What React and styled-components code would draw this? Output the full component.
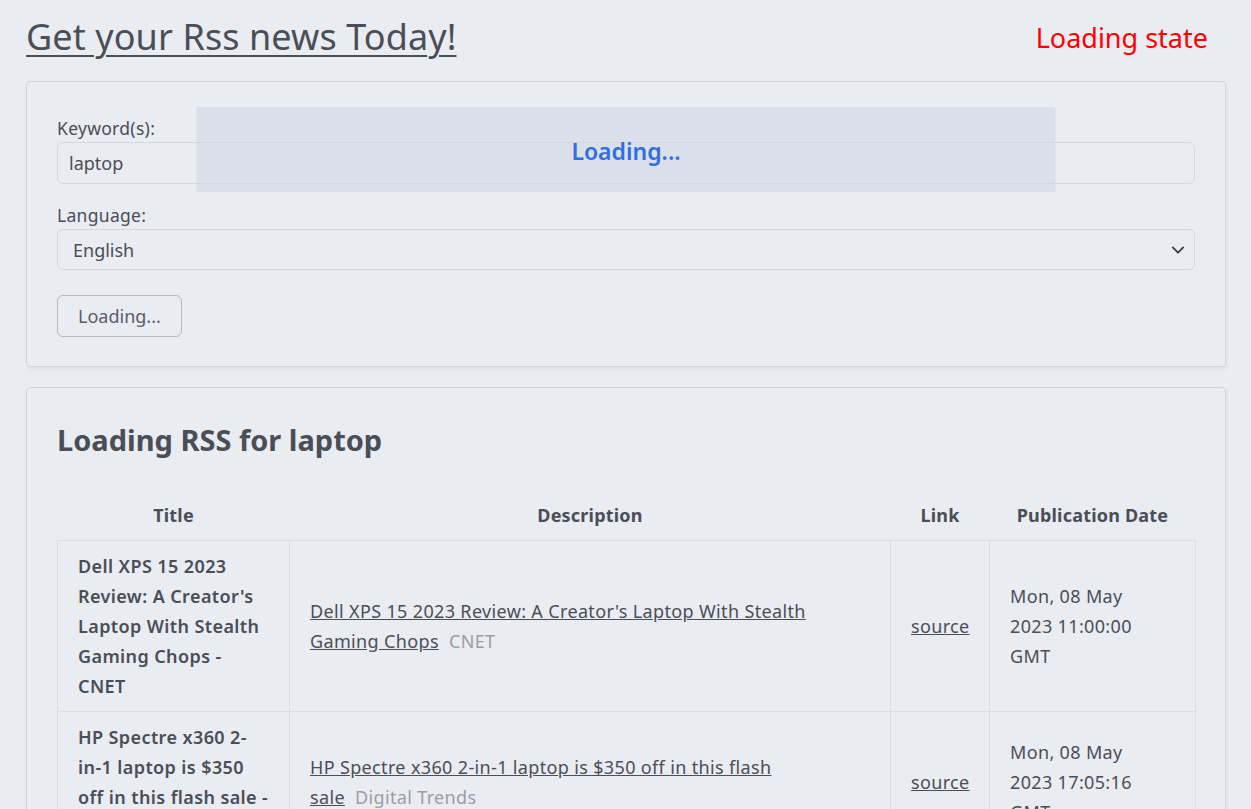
import React from "react";
import styled, { createGlobalStyle } from "styled-components";

const GlobalStyle = createGlobalStyle`
    html, body {
        margin: 0;
        padding: 0;
        background: #e9ecf1;
    }
    body {
        font-family: "Noto Sans", "Open Sans", sans-serif;
        color: #4a4e57;
    }
`;

const Page = styled.div`
    padding: 13px 25px 0 26px;
`;

const Header = styled.header`
    display: flex;
    justify-content: space-between;
    align-items: center;
    padding-right: 18px;
`;

const Heading = styled.h1`
    margin: 0;
    font-size: 36px;
    font-weight: 400;
    line-height: 48px;
    letter-spacing: 0.1px;
    text-decoration: underline;
    text-decoration-thickness: 2px;
    text-underline-offset: 5px;
    color: #4a4e57;
`;

const StateLabel = styled.span`
    font-size: 27px;
    color: #ff0000;
`;

const Card = styled.section`
    position: relative;
    margin-top: ${(p) => p.$gap}px;
    padding: ${(p) => p.$pad};
    border: 1px solid #d2d5db;
    border-radius: 4px;
    box-shadow: 1px 2px 4px rgba(0, 0, 0, 0.06);
`;

const FormGroup = styled.div`
    display: flex;
    flex-direction: column;
    margin-bottom: ${(p) => p.$mb}px;
`;

const Label = styled.label`
    font-size: 17.5px;
    line-height: 24px;
    letter-spacing: 0.3px;
    margin-bottom: 2px;
`;

const Input = styled.input`
    height: 42px;
    box-sizing: border-box;
    padding: 0 11px;
    font: inherit;
    font-size: 18px;
    color: #4a4e57;
    background: transparent;
    border: 1px solid #d4d7dd;
    border-radius: 6px;
`;

const SelectWrap = styled.div`
    position: relative;
`;

const Select = styled.select`
    width: 100%;
    height: 41px;
    box-sizing: border-box;
    padding: 0 15px;
    font: inherit;
    font-size: 18px;
    color: #4a4e57;
    background: transparent;
    border: 1px solid #d4d7dd;
    border-radius: 6px;
    appearance: none;
`;

const Chevron = styled.svg`
    position: absolute;
    right: 10px;
    top: 14px;
    pointer-events: none;
`;

const Button = styled.button`
    height: 42px;
    padding: 0 20px;
    font: inherit;
    font-size: 18px;
    color: #595d69;
    background: transparent;
    border: 1px solid #b5b9c3;
    border-radius: 6px;
`;

const Overlay = styled.div`
    position: absolute;
    left: 50%;
    top: 25px;
    transform: translateX(-50%);
    width: 859px;
    height: 85px;
    box-sizing: border-box;
    padding-top: 30px;
    text-align: center;
    background: rgba(205, 214, 226, 0.55);
    color: #2f6fe3;
    font-size: 23px;
    font-weight: 600;
    line-height: 28px;
`;

const SubHeading = styled.h2`
    margin: 0 0 37px;
    font-size: 29px;
    font-weight: 700;
    line-height: 36px;
`;

const Table = styled.table`
    width: 100%;
    table-layout: fixed;
    border-collapse: collapse;
    font-size: 18px;
    line-height: 30px;
    letter-spacing: 0.35px;
`;

const Th = styled.th`
    padding: 5px 20px 10px;
    font-weight: 700;
    text-align: center;
    letter-spacing: 0.2px;
`;

const Td = styled.td`
    padding: 10px ${(p) => p.$padRight || 20}px 10px 20px;
    border: 1px solid #dadde3;
    vertical-align: middle;
    text-align: ${(p) => p.$align || "left"};
    font-weight: ${(p) => (p.$bold ? 600 : 400)};
    letter-spacing: ${(p) => (p.$bold ? 0.4 : 0.35)}px;
`;

const Link = styled.a`
    color: #4a4e57;
    text-decoration: underline;
`;

const NoWrap = styled.span`
    white-space: nowrap;
`;

const Source = styled.span`
    color: #9a9ea6;
`;

const items = [
    {
        title: "Dell XPS 15 2023 Review: A Creator's Laptop With Stealth Gaming Chops - CNET",
        headline: "Dell XPS 15 2023 Review: A Creator's Laptop With Stealth Gaming",
        last: "Chops",
        source: "CNET",
        date: "Mon, 08 May 2023 11:00:00 GMT",
    },
    {
        title: "HP Spectre x360 2-in-1 laptop is $350 off in this flash sale - Digital Trends",
        headline: "HP Spectre x360 2-in-1 laptop is $350 off in this flash",
        last: "sale",
        source: "Digital Trends",
        date: "Mon, 08 May 2023 17:05:16 GMT",
    },
];

export default function App() {
    return (
        <Page>
            <GlobalStyle />
            <Header>
                <Heading>Get your Rss news Today!</Heading>
                <StateLabel>Loading state</StateLabel>
            </Header>

            <Card $gap={20} $pad="34px 30px 29px">
                <FormGroup $mb={19}>
                    <Label>Keyword(s):</Label>
                    <Input type="text" defaultValue="laptop" />
                </FormGroup>
                <FormGroup $mb={25}>
                    <Label>Language:</Label>
                    <SelectWrap>
                        <Select defaultValue="en">
                            <option value="en">English</option>
                        </Select>
                        <Chevron width="14" height="14" viewBox="0 0 16 16">
                            <path d="M2 5l6 6 6-6" fill="none" stroke="#343a40" strokeWidth="2" strokeLinecap="round" strokeLinejoin="round" />
                        </Chevron>
                    </SelectWrap>
                </FormGroup>
                <Button>Loading...</Button>
                <Overlay>Loading...</Overlay>
            </Card>

            <Card $gap={20} $pad="34px 30px 0">
                <SubHeading>Loading RSS for laptop</SubHeading>
                <Table>
                    <colgroup>
                        <col style={{ width: 232 }} />
                        <col style={{ width: 601 }} />
                        <col style={{ width: 99 }} />
                        <col style={{ width: 206 }} />
                    </colgroup>
                    <thead>
                        <tr>
                            <Th>Title</Th>
                            <Th>Description</Th>
                            <Th>Link</Th>
                            <Th>Publication Date</Th>
                        </tr>
                    </thead>
                    <tbody>
                        {items.map((item) => (
                            <tr key={item.title}>
                                <Td $bold>{item.title}</Td>
                                <Td>
                                    <Link href="#">{item.headline} </Link>
                                    <NoWrap>
                                        <Link href="#">{item.last}</Link>
                                        {"\u00a0\u00a0"}
                                        <Source>{item.source}</Source>
                                    </NoWrap>
                                </Td>
                                <Td $align="center">
                                    <Link href="#">source</Link>
                                </Td>
                                <Td $padRight={34}>{item.date}</Td>
                            </tr>
                        ))}
                    </tbody>
                </Table>
            </Card>
        </Page>
    );
}
